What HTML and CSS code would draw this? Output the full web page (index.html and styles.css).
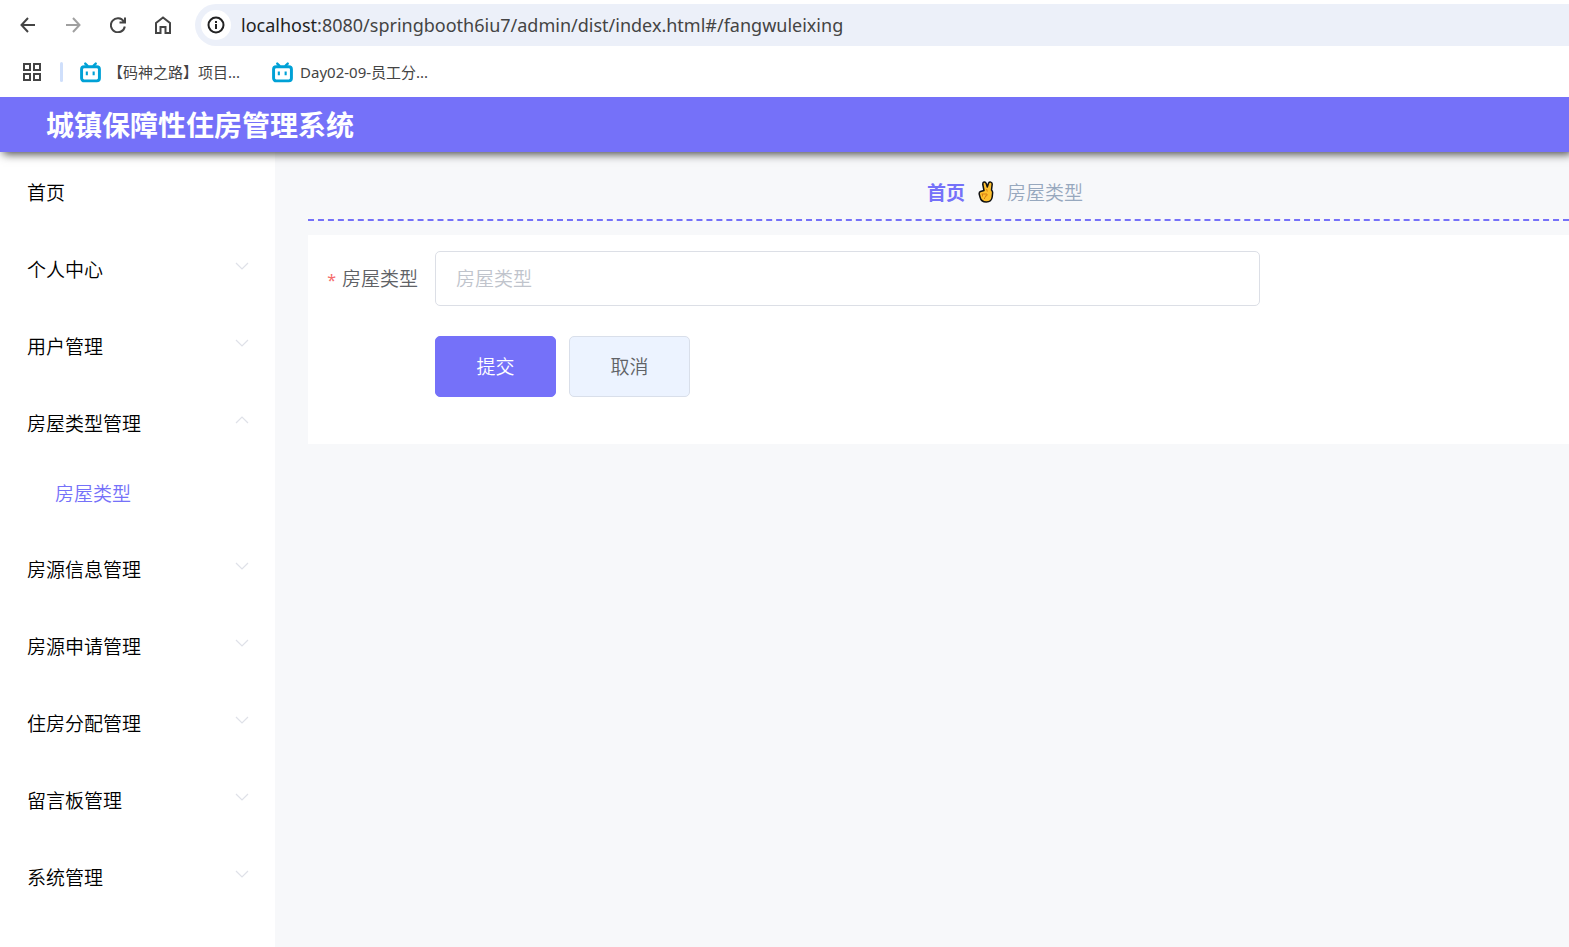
FILE: index.html
```html
<!DOCTYPE html>
<html lang="zh-CN">
<head>
<meta charset="utf-8">
<title>城镇保障性住房管理系统</title>
<link rel="stylesheet" href="styles.css">
</head>
<body>
<svg class="defs" aria-hidden="true">
  <symbol id="down" viewBox="0 0 14 8"><path d="M1 1l6 6 6-6"/></symbol>
  <symbol id="tv" viewBox="0 0 20 20"><path d="M5 1.500l2 2M15 1.500l-2 2" stroke="#00a1d6" stroke-width="2.200" stroke-linecap="round"/><rect x="1.500" y="4.500" width="17" height="13.500" rx="2.500" fill="#fff" stroke="#00a1d6" stroke-width="2.800"/><path d="M6.500 9v3.500M13 9v3.500" stroke="#00a1d6" stroke-width="2"/></symbol>
</svg>
<div class="browser">
  <div class="toolbar">
    <button class="tool" aria-label="后退"><svg width="16" height="16" viewBox="0 0 16 16"><path d="M15 8H2M8 1L1.500 8 8 15"/></svg></button>
    <button class="tool" aria-label="前进" disabled><svg width="16" height="16" viewBox="0 0 16 16"><path d="M1 8h13M8 1l6.500 7L8 15"/></svg></button>
    <button class="tool" aria-label="刷新"><svg width="16" height="16" viewBox="0 0 16 16"><path d="M13.800 4.500A7 7 0 1 0 14.800 9.500M15 0.500V5.500H9.500"/></svg></button>
    <button class="tool" aria-label="主页"><svg width="16" height="18" viewBox="0 0 16 18"><path d="M1 7L8 1.500 15 7V17H10.500V11H5.500V17H1Z"/></svg></button>
    <div class="address">
      <button class="info" aria-label="网站信息"><svg width="18" height="18" viewBox="0 0 18 18"><circle cx="9" cy="9" r="7.500"/><path d="M9 8v5M9 5v2"/></svg></button>
      <span class="url"><span class="host">localhost</span>:8080/springbooth6iu7/admin/dist/index.html#/fangwuleixing</span>
    </div>
  </div>
  <div class="bookmarks">
    <button class="apps" aria-label="应用"><svg width="18" height="18" viewBox="0 0 18 18"><path d="M1 1h6v6H1zM11 1h6v6h-6zM1 11h6v6H1zM11 11h6v6h-6z"/></svg></button>
    <span class="divider"></span>
    <a class="bookmark" href="#"><svg class="tv"><use href="#tv"/></svg>【码神之路】项目...</a>
    <a class="bookmark" href="#"><svg class="tv"><use href="#tv"/></svg>Day02-09-员工分...</a>
  </div>
</div>
<header class="header"><h1 class="title">城镇保障性住房管理系统</h1></header>
<div class="layout">
  <nav class="sidebar">
    <a class="item" href="#">首页</a>
    <a class="item" href="#">个人中心<svg class="arrow"><use href="#down"/></svg></a>
    <a class="item" href="#">用户管理<svg class="arrow"><use href="#down"/></svg></a>
    <a class="item" href="#">房屋类型管理<svg class="arrow open"><use href="#down"/></svg></a>
    <div class="submenu"><a class="subitem" href="#">房屋类型</a></div>
    <a class="item" href="#">房源信息管理<svg class="arrow"><use href="#down"/></svg></a>
    <a class="item" href="#">房源申请管理<svg class="arrow"><use href="#down"/></svg></a>
    <a class="item" href="#">住房分配管理<svg class="arrow"><use href="#down"/></svg></a>
    <a class="item" href="#">留言板管理<svg class="arrow"><use href="#down"/></svg></a>
    <a class="item" href="#">系统管理<svg class="arrow"><use href="#down"/></svg></a>
  </nav>
  <main class="main">
    <div class="breadcrumb">
      <a class="home" href="#">首页</a>
      <svg class="hand" width="16" height="22" viewBox="0 0 16 22"><path d="M2.500 10.500L6 9.500 4.800 3.500Q4.600 1.300 6.100 1T8.300 2.800L9.300 6 10.600 2Q11.300 .7 12.800 1.100T14.200 3.200L13.500 9Q14.800 10.500 14.600 12L14.200 16Q13.500 21 8.300 21T2 16L1.200 13Q1 11 2.500 10.500Z" fill="#ffc02e" stroke="#111" stroke-width="1.500" stroke-linejoin="round"/><path d="M3.500 13h5.500q1 2-2 2.300M4.500 13v2.500M8.500 8l.8 2.500M8 15.300q-1.600 1-1.600 2.700" fill="none" stroke="#d77d12" stroke-width="1"/></svg>
      <span>房屋类型</span>
    </div>
    <form class="card">
      <div class="field">
        <label class="label" for="type"><span class="required">*</span>房屋类型</label>
        <input class="input" id="type" type="text" placeholder="房屋类型">
      </div>
      <div class="actions">
        <button class="btn primary" type="button">提交</button>
        <button class="btn" type="button">取消</button>
      </div>
    </form>
  </main>
</div>
</body>
</html>
```
FILE: styles.css
```css
* { box-sizing: border-box; }
body {
  margin: 0;
  min-height: 100vh;
  display: flex;
  flex-direction: column;
  overflow-x: hidden;
  font: 350 19px/28px "Noto Sans CJK SC", sans-serif;
  color: #000;
  background: #fff;
}
a { color: inherit; text-decoration: none; }
button, input { font: inherit; }
svg { flex: none; }
.defs { position: absolute; width: 0; height: 0; }
.browser { position: relative; z-index: 2; height: 97px; background: #fff; color: #444; }
.toolbar { display: flex; align-items: center; height: 50px; padding-left: 12px; }
.tool, .info, .apps {
  display: flex;
  align-items: center;
  justify-content: center;
  padding: 0;
  border: 0;
  background: none;
}
.tool { width: 32px; height: 32px; margin-right: 13px; }
.tool path, .info path, .info circle, .apps path { fill: none; stroke: #444; stroke-width: 2; }
.tool:disabled { opacity: 0.5; }
.address {
  flex: 1;
  display: flex;
  align-items: center;
  gap: 10px;
  height: 42px;
  margin-left: 3px;
  padding-left: 6px;
  border-radius: 21px 0 0 21px;
  background: #ecf0f9;
}
.info { width: 30px; height: 30px; border-radius: 50%; background: #fff; }
.info path, .info circle { stroke: #222; }
.url { font: 400 18px/28px "Noto Sans", sans-serif; white-space: nowrap; }
.host { color: #1f1f1f; }
.bookmarks {
  display: flex;
  align-items: center;
  height: 44px;
  padding-left: 23px;
  font-family: "Noto Sans", "Noto Sans CJK SC", sans-serif;
  font-size: 15px;
  font-weight: 400;
}
.divider { width: 3px; height: 20px; margin: 0 17px 0 19px; border-radius: 2px; background: #cfdffb; }
.bookmark { display: flex; align-items: center; gap: 7px; margin-right: 32px; white-space: nowrap; }
.tv { width: 21px; height: 21px; }
.header {
  position: relative;
  z-index: 1;
  display: flex;
  align-items: center;
  height: 55px;
  padding: 0 0 2px 46px;
  background: #7571f9;
  box-shadow: 3px 2px 9px #444;
}
.title { margin: 0; font-size: 28px; line-height: 40px; font-weight: 700; color: #fff; }
.layout { flex: 1; display: flex; }
.sidebar { flex: none; width: 275px; padding-top: 1px; }
.item { display: flex; align-items: center; justify-content: space-between; height: 77px; padding: 0 26px 0 27px; }
.arrow { width: 14px; height: 8px; margin-bottom: 6px; fill: none; stroke: #dfe1e8; stroke-width: 1.2; }
.open { transform: rotate(180deg); }
.submenu { height: 69px; }
.subitem { display: flex; align-items: center; height: 64px; padding-left: 55px; color: #7571f9; }
.main { flex: 1; min-width: 0; padding: 25px 0 0 33px; background: #f7f8fa; }
.breadcrumb {
  display: flex;
  align-items: center;
  justify-content: center;
  gap: 13px;
  height: 44px;
  padding: 0 0 12px 133px;
  border-bottom: 2px dashed #7571f9;
  color: #97a8be;
}
.home { font-weight: 700; color: #7571f9; }
.card { margin-top: 14px; padding: 16px 309px 47px 0; background: #fff; }
.field { display: flex; align-items: center; }
.label { flex: none; width: 127px; padding-right: 17px; text-align: right; color: #606266; }
.required { margin-right: 6px; font-family: "Noto Sans", sans-serif; font-size: 16px; font-weight: 400; color: #f56c6c; }
.input {
  flex: 1;
  min-width: 0;
  height: 55px;
  padding: 0 20px 2px;
  border: 1px solid #dcdfe6;
  border-radius: 5px;
  background: #fff;
  color: #606266;
}
.input::placeholder { color: #c0c4cc; }
.actions { display: flex; gap: 13px; padding: 30px 0 0 127px; }
.btn {
  width: 121px;
  height: 61px;
  padding: 0 0 2px;
  border: 1px solid #d9dfea;
  border-radius: 5px;
  background: #ecf3ff;
  color: #606266;
}
.primary { border-color: #7571f9; background: #7571f9; color: #fff; }
```
